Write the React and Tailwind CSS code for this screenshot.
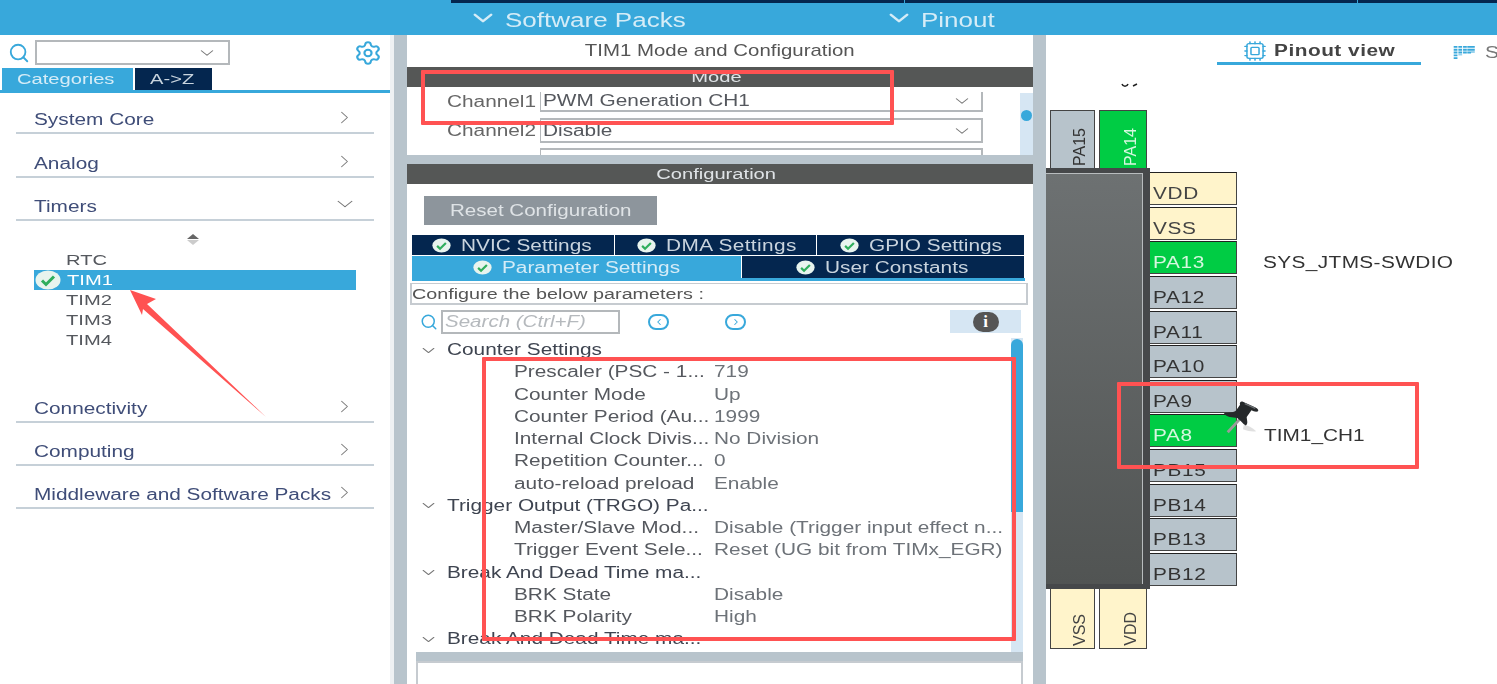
import { ChevronDown, ChevronRight, Cpu, Search, Settings } from 'lucide-react'

// the whole reference is a screenshot stretched sideways, so text gets stretched too
const Wide = ({ children, className = '' }) => (
  <span className={`inline-block origin-left scale-x-[1.3] whitespace-nowrap ${className}`}>{children}</span>
)
const WideC = ({ children, className = '' }) => (
  <span className={`inline-block origin-center scale-x-[1.3] whitespace-nowrap ${className}`}>{children}</span>
)

const Check = ({ className = '' }) => (
  <svg viewBox="0 0 26 20" className={className}>
    <ellipse cx="13" cy="10" rx="12.5" ry="9.5" fill="#e8f4ee" />
    <path d="M7 10.5l4 4 8-8" fill="none" stroke="#2fae5c" strokeWidth="3" />
  </svg>
)

function CategoryRow({ label, open }) {
  return (
    <div className="h-[43.4px] mx-4 border-b-2 border-[#c6d0d8] flex items-end justify-between pb-0.5 pl-[18px] pr-[19px] text-[16px] leading-5 text-[#3f4d78]">
      <Wide>{label}</Wide>
      {open
        ? <ChevronDown size={22} strokeWidth={1.1} className="text-[#777] mb-0.5 scale-x-125 -mr-px" />
        : <ChevronRight size={21} strokeWidth={1.1} className="text-[#777] mb-0.5 scale-x-110" />}
    </div>
  )
}

function LeftPanel() {
  return (
    <aside className="w-[390px] shrink-0 bg-white flex flex-col">
      <div className="h-[33px] flex items-center pl-2 pr-[9px] pt-0.5">
        <Search size={22} strokeWidth={2} className="text-[#38a8db] shrink-0" />
        <div className="ml-[5px] w-[195px] h-[25px] border-2 border-[#b4b8bb] flex items-center justify-end pr-3">
          <ChevronDown size={18} strokeWidth={1.3} className="text-[#777] scale-x-125" />
        </div>
        <Settings size={26} strokeWidth={1.8} className="ml-auto text-[#38a8db] scale-x-110" />
      </div>
      <div className="h-[25px] flex items-stretch pl-0.5 border-b-[3px] border-[#38a8db] text-[15.5px] leading-[21px]">
        <div className="w-[131px] bg-[#38a8db] text-[#d5ecf7] pl-[15px]"><Wide>Categories</Wide></div>
        <div className="w-[77px] ml-0.5 bg-[#04264f] text-[#c9d4de] pl-[15px]"><Wide>A-&gt;Z</Wide></div>
      </div>
      <div className="-mt-0.5">
        <CategoryRow label="System Core" />
        <CategoryRow label="Analog" />
        <CategoryRow label="Timers" open />
      </div>
      <div className="h-[158px] flex flex-col pl-[34px] text-[15.5px] leading-5 text-[#55585e]">
        <div className="h-[29px] flex flex-col items-center w-[318px] pt-[13px] text-[#888]">
          <div className="w-0 h-0 border-x-[6px] border-x-transparent border-b-[5px] border-b-[#666]" />
          <div className="w-0 h-0 mt-px border-x-[6px] border-x-transparent border-t-[5px] border-t-[#ccc]" />
        </div>
        <div className="pl-8 h-[20px]"><Wide>RTC</Wide></div>
        <div className="w-[322px] h-5 bg-[#38a8db] flex items-center text-white">
          <Check className="w-[26px] h-5 ml-px mr-[6px] shrink-0" />
          <Wide>TIM1</Wide>
        </div>
        <div className="pl-8 h-[20px]"><Wide>TIM2</Wide></div>
        <div className="pl-8 h-[20px]"><Wide>TIM3</Wide></div>
        <div className="pl-8 h-[20px]"><Wide>TIM4</Wide></div>
      </div>
      <CategoryRow label="Connectivity" />
      <CategoryRow label="Computing" />
      <CategoryRow label="Middleware and Software Packs" />
    </aside>
  )
}

const Gutter = ({ className = '' }) => <div className={`bg-[#b8c4cc] shrink-0 ${className}`} />

function SelectBox({ value, className = '' }) {
  return (
    <div className={`ml-[3px] w-[443px] border-2 border-[#b4b8bb] flex items-center justify-between pl-0.5 pr-2.5 text-[16px] text-[#55585e] ${className}`}>
      <Wide>{value}</Wide>
      {value && <ChevronDown size={18} strokeWidth={1.3} className="text-[#777] scale-x-125" />}
    </div>
  )
}

function ModeSection() {
  return (
    <div className="h-[120px] flex flex-col">
      <div className="h-[32px] flex items-center justify-center text-[15.7px] text-[#555] pr-px"><WideC>TIM1 Mode and Configuration</WideC></div>
      <div className="h-5 bg-[#555756] flex items-center justify-center text-[15.5px] text-[#dfe3e6] pr-[7px]"><WideC>Mode</WideC></div>
      <div className="relative flex-1 overflow-hidden pl-10 pt-[5px]">
        <div className="flex items-center text-[16px] text-[#666] h-[20px]">
          <div className="w-[90px]"><Wide>Channel1</Wide></div>
          <SelectBox value="PWM Generation CH1" className="h-[20px] border-t-0 border-l-[1px]" />
        </div>
        <div className="flex items-center text-[16px] text-[#666] mt-[6px]">
          <div className="w-[90px]"><Wide>Channel2</Wide></div>
          <SelectBox value="Disable" className="h-[25px] border-l-[1px]" />
        </div>
        <div className="flex mt-[5px] pl-[90px]"><SelectBox value="" className="h-[25px] border-l-[1px]" /></div>
        <div className="absolute right-0 top-[6px] bottom-0 w-[13px] bg-[#d6e6f3]">
          <div className="w-[11px] h-[11px] mx-auto mt-[17px] rounded-full bg-[#38a8db]" />
        </div>
      </div>
    </div>
  )
}

const TabCell = ({ label, active, className = '', textClass = 'w-[128px]' }) => (
  <div className={`flex items-center justify-center text-[16px] pt-px ${active ? 'bg-[#38a8db] text-[#d5ecf7]' : 'bg-[#04264f] text-[#c9d4de]'} ${className}`}>
    <Check className="w-[19px] h-[15px] shrink-0 mr-[10px]" />
    <span className={textClass}><Wide>{label}</Wide></span>
  </div>
)

const Param = ({ label, value }) => (
  <div className="h-[22.25px] flex items-center pl-[107px] text-[16px] text-[#55585e] leading-[22px]">
    <div className="w-[200px] shrink-0"><Wide>{label}</Wide></div>
    <Wide className="text-[#6d7278]">{value}</Wide>
  </div>
)

const Group = ({ label }) => (
  <div className="h-[22.25px] flex items-center pl-[13px] text-[16px] text-[#3e4450] leading-[22px]">
    <ChevronDown size={17} strokeWidth={1.3} className="text-[#777] scale-x-125 shrink-0 mr-[10px]" />
    <Wide>{label}</Wide>
  </div>
)

function ConfigSection() {
  return (
    <div className="flex-1 flex flex-col min-h-0">
      <div className="h-5 bg-[#555756] flex items-center justify-center text-[15.5px] text-[#dfe3e6] pr-[7px]"><WideC>Configuration</WideC></div>
      <div className="ml-[17px] mt-3 w-[233px] h-[29px] bg-[#8d959c] flex items-center pl-[26px] text-[15.8px] text-[#dfe3e6]">
        <Wide>Reset Configuration</Wide>
      </div>
      <div className="mt-2.5 ml-[5px] w-[612px] h-5 flex gap-px">
        <TabCell label="NVIC Settings" className="w-[202px]" textClass="w-[134px]" />
        <TabCell label="DMA Settings" className="w-[201px]" textClass="w-[128px] tracking-[0.3px]" />
        <TabCell label="GPIO Settings" className="flex-1" textClass="w-[132px]" />
      </div>
      <div className="mt-px ml-[5px] w-[612px] h-[22px] flex gap-px">
        <TabCell label="Parameter Settings" active className="w-[329px]" textClass="w-[179px]" />
        <TabCell label="User Constants" className="flex-1" textClass="w-[146px]" />
      </div>
      <div className="ml-[5px] w-[613px] h-[3px] bg-[#38a8db]" />
      <div className="mx-[3px] mt-0.5 w-[618px] h-[22px] border-2 border-[#c6cbd0] border-t-[1px] flex items-center pl-0 pt-px text-[15.2px] text-[#555]">
        <Wide>Configure the below parameters :</Wide>
      </div>
      <div className="h-[28px] mt-[5px] flex items-start pl-[13px]">
        <Search size={18} strokeWidth={2} className="text-[#38a8db] mt-[3px] shrink-0" />
        <div className="ml-[3px] w-[179px] h-[24px] border-2 border-[#b4b8bb] flex items-center pl-0.5 text-[15.8px] italic text-[#b5b9bd]">
          <Wide>Search (Ctrl+F)</Wide>
        </div>
        <div className="ml-7 mt-1 w-[21px] h-[16px] border-2 border-[#38a8db] rounded-full flex items-center justify-center">
          <ChevronRight size={10} strokeWidth={2.5} className="rotate-180 text-[#38a8db]" />
        </div>
        <div className="ml-[56px] mt-1 w-[21px] h-[16px] border-2 border-[#38a8db] rounded-full flex items-center justify-center">
          <ChevronRight size={10} strokeWidth={2.5} className="text-[#38a8db]" />
        </div>
        <div className="ml-[204px] w-[71px] h-[23px] bg-[#d6e6f3] flex items-center justify-center">
          <div className="w-[26px] h-[20px] rounded-full bg-[#555] flex items-center justify-center text-white text-[17px] font-bold [font-family:'Liberation_Serif',serif]">i</div>
        </div>
      </div>
      <div className="relative h-[314px] overflow-hidden mr-[10px] pr-3 pt-px">
        <Group label="Counter Settings" />
        <Param label="Prescaler (PSC - 1..." value="719" />
        <Param label="Counter Mode" value="Up" />
        <Param label="Counter Period (Au..." value="1999" />
        <Param label="Internal Clock Divis..." value="No Division" />
        <Param label="Repetition Counter..." value="0" />
        <Param label="auto-reload preload" value="Enable" />
        <Group label="Trigger Output (TRGO) Pa..." />
        <Param label="Master/Slave Mod..." value="Disable (Trigger input effect n..." />
        <Param label="Trigger Event Sele..." value="Reset (UG bit from TIMx_EGR)" />
        <Group label="Break And Dead Time ma..." />
        <Param label="BRK State" value="Disable" />
        <Param label="BRK Polarity" value="High" />
        <Group label="Break And Dead Time ma..." />
        <div className="absolute right-0 top-0 bottom-0 w-3 bg-[#d6e6f3]">
          <div className="h-[173px] mt-px bg-[#38a8db] rounded-t-md" />
        </div>
      </div>
      <div className="h-[32px] mx-[9px] mr-[10px] bg-[#b8c4cc] pt-[9px] ">
        <div className="h-full bg-white border-2 border-[#c6cbd0] border-b-0" />
      </div>
    </div>
  )
}

const pinColors = {
  gray: 'bg-[#b7c3cb] text-[#333]',
  yellow: 'bg-[#fff4cb] text-[#444]',
  green: 'bg-[#00cc44] text-[#d6f7df]',
}

const sidePins = [
  ['VDD', 'yellow'], ['VSS', 'yellow'], ['PA13', 'green'], ['PA12', 'gray'], ['PA11', 'gray'], ['PA10', 'gray'],
  ['PA9', 'gray'], ['PA8', 'green'], ['PB15', 'gray'], ['PB14', 'gray'], ['PB13', 'gray'], ['PB12', 'gray'],
]

const SidePin = ({ name, color }) => (
  <div className={`h-[33px] w-[87px] border border-l-0 border-[#444] border-t-[#222] flex items-end pl-[3px] text-[16px] leading-[20px] tracking-[0.5px] ${pinColors[color]}`}>
    <Wide>{name}</Wide>
  </div>
)

const TopPin = ({ name, color, className = '' }) => (
  <div className={`border border-[#444] flex justify-end items-end pb-0.5 text-[16px] leading-none ${pinColors[color]} ${className}`}>
    <span className="[writing-mode:vertical-rl] rotate-180">{name}</span>
  </div>
)

function Pushpin({ className = '' }) {
  return (
    <svg viewBox="0 0 40 40" className={className}>
      <path d="M6 36L19 22" stroke="#9a9a9a" strokeWidth="3" />
      <path d="M22 33c6 2 10 3 14 2-4-4-9-6-13-7z" fill="#000" opacity="0.12" />
      <path d="M2 16c5-1 10 0 13-3l4-6c-1-2 1-4 3-3l11 5c3 1 6 3 5 5-2 1-5 0-7-1l-5 7c0 3 2 7-1 9-3-2-6-6-9-8-5-1-11 0-14-5z" fill="#26292b" />
      <path d="M24 6l11 5" stroke="#6b6f72" strokeWidth="1.5" />
    </svg>
  )
}

function PinoutPanel() {
  return (
    <div className="relative flex-1 bg-white overflow-hidden">
      <div className="h-[30px] relative flex items-end text-[16px] text-[#444]">
        <div className="ml-[171px] w-[204px] h-[30px] flex items-center justify-center border-b-[3px] border-[#38a8db] font-bold pt-[5px] tracking-[0.4px]">
          <Cpu size={22} strokeWidth={1.5} className="text-[#38a8db] shrink-0 mr-2 scale-x-110" />
          <span className="w-[121px]"><Wide>Pinout view</Wide></span>
        </div>
        <div className="ml-8 h-[30px] flex items-center text-[#777] pt-[5px]">
          <svg viewBox="0 0 22 16" className="w-[22px] h-[15px] text-[#38a8db] mr-2.5" fill="none" stroke="currentColor">
            <path d="M2 1v15M7 1v10M12 1v8M16.500 1v8M20.500 1v7" strokeDasharray="2 1" strokeWidth="4" />
          </svg>
          <Wide>S</Wide>
        </div>
      </div>

      <svg viewBox="0 0 18 5" className="absolute left-[75px] top-[48px] w-[18px] h-[5px]" fill="none" stroke="#222" strokeWidth="1.5">
        <path d="M1 1c1 3 5 3 6 0M12 3l4-2" />
      </svg>

      {/* package: pins around the chip body */}
      <div className="absolute left-[4px] top-[75px] flex gap-1 h-[58px]">
        <TopPin name="PA15" color="gray" className="w-[45px] border-b-0 pr-[6px]" />
        <TopPin name="PA14" color="green" className="w-[48px] border-b-0 pr-[7px]" />
      </div>
      <div className="absolute left-0 top-[133px] w-[104px] h-[421px] bg-[#46484a] pt-[5px] pr-[7px] pb-[5px]">
        <div className="h-full border-t border-[#b8bcbe] border-r border-[#2d2f30] bg-gradient-to-b from-[#6d7172] to-[#515453]" />
      </div>
      <div className="absolute left-[104px] top-[137px] flex flex-col gap-[1.65px]">
        {sidePins.map(([name, color]) => <SidePin key={name} name={name} color={color} />)}
      </div>
      <div className="absolute left-[4px] top-[554px] flex gap-1 h-[60px]">
        <TopPin name="VSS" color="yellow" className="w-[45px] border-t-0 pr-[6px]" />
        <TopPin name="VDD" color="yellow" className="w-[48px] border-t-0 pr-[7px]" />
      </div>
      <div className="absolute left-[217px] top-[216px] text-[16px] tracking-[0.3px] text-[#333]"><Wide>SYS_JTMS-SWDIO</Wide></div>
      <div className="absolute left-[218px] top-[389px] text-[16px] text-[#333]"><Wide>TIM1_CH1</Wide></div>
      <Pushpin className="absolute left-[175px] top-[363px] w-[40px] h-[38px] blur-[0.4px]" />
    </div>
  )
}

export default function App() {
  return (
    <div className="relative w-[1497px] h-[684px] overflow-hidden bg-white flex flex-col [font-family:'Liberation_Sans',Arial,sans-serif]">
      <header className="h-[35px] shrink-0 bg-[#38a8db] relative flex items-center text-[20px] text-[#d5ecf7]">
        <div className="absolute top-0 left-[451px] right-0 h-[3px] flex gap-px">
          <div className="w-[453px] bg-[#04264f]" />
          <div className="w-[452px] bg-[#04264f]" />
          <div className="flex-1 bg-[#04264f]" />
        </div>
        <ChevronDown size={26} strokeWidth={2} className="ml-[470px] scale-x-125" />
        <div className="ml-[9px] w-[381px] pt-1"><Wide>Software Packs</Wide></div>
        <ChevronDown size={26} strokeWidth={2} className="scale-x-125" />
        <div className="ml-[9px] pt-1"><Wide>Pinout</Wide></div>
      </header>

      <div className="flex-1 flex min-h-0">
        <LeftPanel />
        <div className="w-1 shrink-0 bg-[#eef1f3]" />
        <Gutter className="w-[13px]" />
        <main className="w-[626px] shrink-0 flex flex-col bg-white">
          <ModeSection />
          <Gutter className="h-[9px]" />
          <ConfigSection />
        </main>
        <Gutter className="w-[13px] flex flex-col items-center pt-1 gap-1 pl-px">
          <div className="w-0 h-0 border-y-[7px] border-y-transparent border-r-[9px] border-r-[#555]" />
          <div className="w-0 h-0 border-y-[7px] border-y-transparent border-l-[9px] border-l-[#555]" />
        </Gutter>
        <PinoutPanel />
      </div>

      {/* red markup drawn over the screenshot */}
      <div className="absolute left-[421px] top-[70px] w-[473px] h-[55px] border-4 border-[#ff5252] rounded-[1px]" />
      <div className="absolute left-[482px] top-[357px] w-[534px] h-[284px] border-4 border-[#ff5252] rounded-[1px]" />
      <div className="absolute left-[1117px] top-[382px] w-[302px] h-[87px] border-4 border-[#ff5252] rounded-[1px]" />
      <svg viewBox="0 0 150 140" className="absolute left-[125px] top-[287px] w-[150px] h-[140px]">
        <path d="M5 3L31 12 22 17 141 130 18 22 17 28z" fill="#ff5252" />
      </svg>
    </div>
  )
}
